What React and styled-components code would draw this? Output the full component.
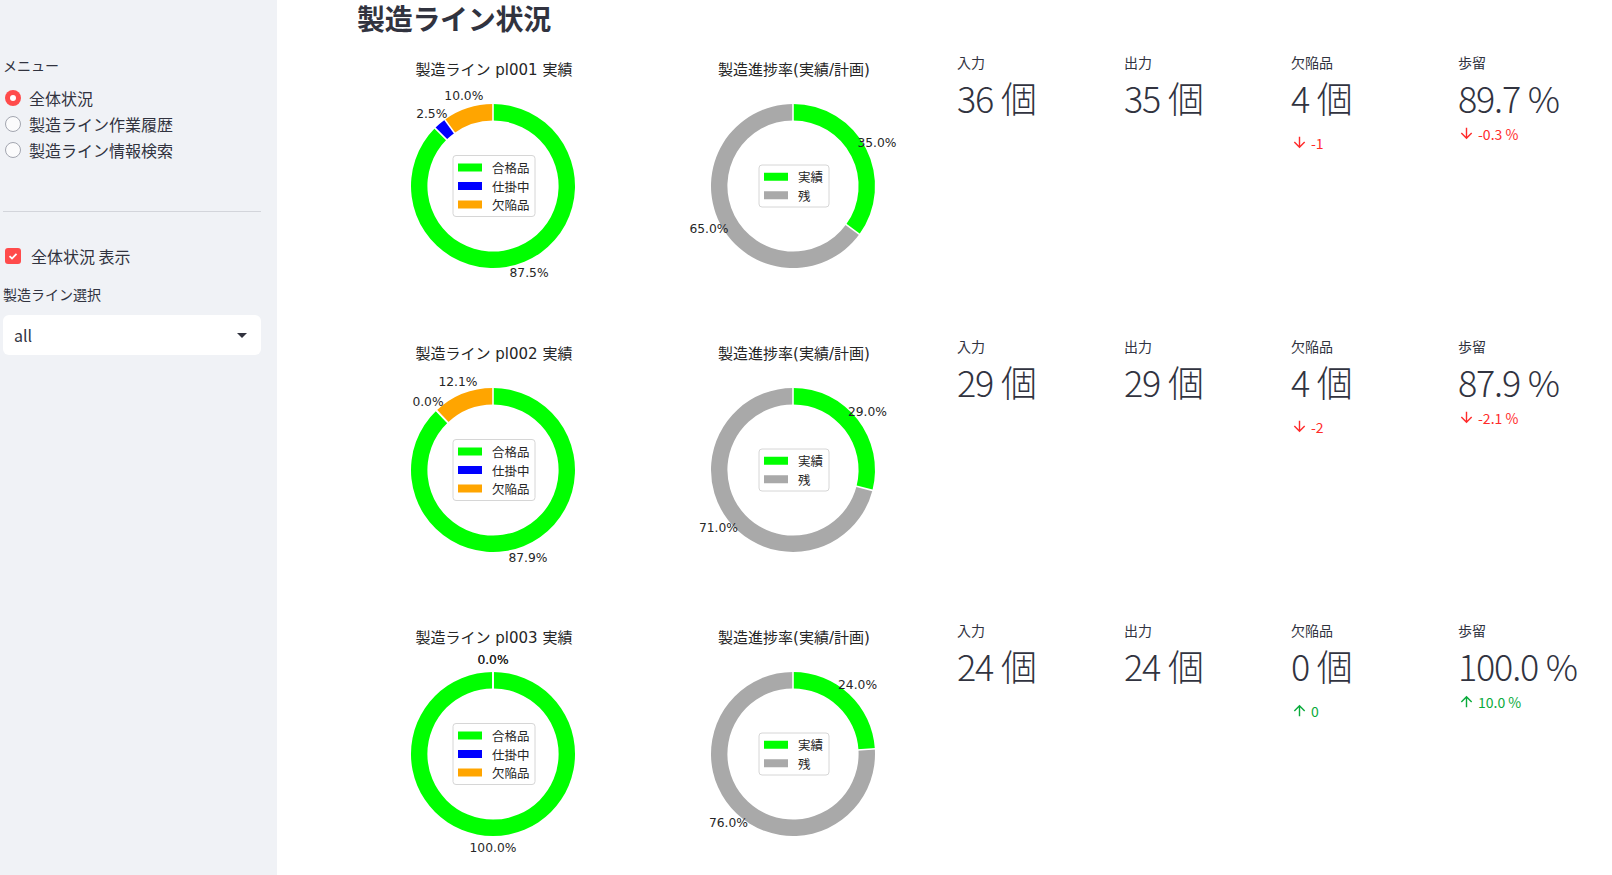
import React from "react";
import styled, { createGlobalStyle } from "styled-components";

const GlobalStyle = createGlobalStyle`
  html, body {
    margin: 0;
    padding: 0;
    background: #ffffff;
    overflow: hidden;
  }
  body {
    font-family: "Noto Sans CJK JP", "Noto Sans", sans-serif;
    color: #31333f;
  }
`;

const Page = styled.div`
  display: flex;
  width: 1612px;
  height: 875px;
`;

const Sidebar = styled.aside`
  flex: 0 0 277px;
  box-sizing: border-box;
  background: #f0f2f6;
  padding: 55px 16px 0 3px;
  display: flex;
  flex-direction: column;
`;

const SmallLabel = styled.div`
  font-size: 14px;
  line-height: 20px;
  color: #31333f;
  margin-top: ${(p) => p.$top || 0}px;
`;

const RadioGroup = styled.div`
  margin-top: 10px;
  display: flex;
  flex-direction: column;
`;

const RadioRow = styled.label`
  display: flex;
  align-items: center;
  height: 26px;
  gap: 8px;
  padding-left: 2px;
  font-size: 16px;
  color: #31333f;
`;

const RadioDot = styled.span`
  box-sizing: border-box;
  width: 16px;
  height: 16px;
  border-radius: 50%;
  flex: 0 0 16px;
  position: relative;
  background: ${(p) => (p.$on ? "#ff4b4b" : "#fbfbfc")};
  border: ${(p) => (p.$on ? "none" : "1.5px solid #a3a6b0")};
  &::after {
    content: "";
    display: ${(p) => (p.$on ? "block" : "none")};
    position: absolute;
    left: 5px;
    top: 5px;
    width: 6px;
    height: 6px;
    border-radius: 50%;
    background: #ffffff;
  }
`;

const Divider = styled.hr`
  border: none;
  border-top: 1px solid #d3d5db;
  margin: 48px 0 0 0;
  width: 100%;
`;

const CheckRow = styled.label`
  display: flex;
  align-items: center;
  gap: 10px;
  height: 24px;
  margin-top: 32px;
  padding-left: 2px;
  font-size: 16px;
  color: #31333f;
`;

const CheckBox = styled.span`
  width: 16px;
  height: 16px;
  flex: 0 0 16px;
  border-radius: 3px;
  background: #ff4b4b;
  display: flex;
  align-items: center;
  justify-content: center;
`;

const SelectBox = styled.div`
  margin-top: 11px;
  height: 40px;
  background: #ffffff;
  border-radius: 6px;
  display: flex;
  align-items: center;
  justify-content: space-between;
  padding: 0 14px 0 11px;
  font-size: 16px;
  color: #31333f;
`;

const Caret = styled.span`
  width: 0;
  height: 0;
  border-left: 5px solid transparent;
  border-right: 5px solid transparent;
  border-top: 5px solid #31333f;
`;

const Main = styled.main`
  flex: 1;
  padding-left: 80px;
  overflow: hidden;
`;

const Title = styled.h1`
  margin: 0;
  font-size: 28px;
  line-height: 36px;
  font-weight: 700;
  color: #31333f;
  letter-spacing: -0.3px;
`;

const LineRow = styled.section`
  display: grid;
  grid-template-columns: 300px 300px repeat(3, 167px) 1fr;
  height: 284px;
  margin-top: ${(p) => (p.$first ? 14 : 0)}px;
`;

const Metric = styled.div`
  display: flex;
  flex-direction: column;
  white-space: nowrap;
`;

const MetricLabel = styled.div`
  font-size: 14px;
  line-height: 20px;
  margin-top: 2px;
  color: #31333f;
`;

const MetricValue = styled.div`
  font-size: 36px;
  font-weight: 300;
  line-height: 48px;
  letter-spacing: -1.2px;
  word-spacing: 1px;
  margin-top: 1px;
  color: #31333f;
`;

const Delta = styled.div`
  display: flex;
  align-items: center;
  gap: 3px;
  font-size: 14px;
  line-height: 16px;
  color: ${(p) => (p.$up ? "rgb(9, 171, 59)" : "rgb(255, 43, 43)")};
  margin-top: ${(p) => (p.$tall ? 13 : 4)}px;
`;

const polar = (cx, cy, r, f) => {
  const a = f * 2 * Math.PI;
  return [cx + r * Math.sin(a), cy - r * Math.cos(a)];
};

const ringPath = (cx, cy, r0, r1, f0, f1) => {
  if (f1 - f0 >= 0.9999) {
    return `M${cx} ${cy - r1} A${r1} ${r1} 0 1 1 ${cx} ${cy + r1} A${r1} ${r1} 0 1 1 ${cx} ${cy - r1} Z M${cx} ${cy - r0} A${r0} ${r0} 0 1 0 ${cx} ${cy + r0} A${r0} ${r0} 0 1 0 ${cx} ${cy - r0} Z`;
  }
  const large = f1 - f0 > 0.5 ? 1 : 0;
  const [x0, y0] = polar(cx, cy, r1, f0);
  const [x1, y1] = polar(cx, cy, r1, f1);
  const [x2, y2] = polar(cx, cy, r0, f1);
  const [x3, y3] = polar(cx, cy, r0, f0);
  return `M${x0} ${y0} A${r1} ${r1} 0 ${large} 1 ${x1} ${y1} L${x2} ${y2} A${r0} ${r0} 0 ${large} 0 ${x3} ${y3} Z`;
};

const CX = 136;
const CY = 136;
const R = 82;
const RI = 65.6;

function Donut({ title, parts, legendWidth, legendRows }) {
  let acc = 0;
  const segs = parts.map((p) => {
    const s = { ...p, f0: acc, f1: acc + p.value / 100 };
    acc += p.value / 100;
    return s;
  });
  const boxH = legendRows.length * 19 + 4;
  const rowStart = CY - ((legendRows.length - 1) * 18.5) / 2;
  return (
    <svg width="300" height="284" style={{ overflow: "visible", display: "block" }}>
      <text
        x={CX + 1}
        y={20}
        textAnchor="middle"
        dominantBaseline="central"
        fontSize="15"
        fill="#262626"
        fontFamily="'DejaVu Sans', 'Noto Sans CJK JP', sans-serif"
      >
        {title}
      </text>
      {segs.map((s, i) =>
        s.f1 - s.f0 > 0 ? (
          <path
            key={i}
            d={ringPath(CX, CY, RI, R, s.f0, s.f1)}
            fill={s.color}
            fillRule="evenodd"
          />
        ) : null
      )}
      {segs.map((s, i) => {
        const [ax, ay] = polar(CX, CY, RI - 1, s.f0);
        const [bx, by] = polar(CX, CY, R + 1, s.f0);
        return <line key={i} x1={ax} y1={ay} x2={bx} y2={by} stroke="#fff" strokeWidth="1.6" />;
      })}
      {segs.map((s, i) => {
        const [tx, ty] = polar(CX, CY, R * 1.15, (s.f0 + s.f1) / 2);
        return (
          <text
            key={i}
            x={tx}
            y={ty}
            textAnchor="middle"
            dominantBaseline="central"
            fontSize="12.3"
            fill="#262626"
            fontFamily="'DejaVu Sans', sans-serif"
          >
            {s.value.toFixed(1)}%
          </text>
        );
      })}
      <rect
        x={CX + 1 - legendWidth / 2}
        y={CY - boxH / 2}
        width={legendWidth}
        height={boxH}
        rx="3"
        fill="#ffffff"
        fillOpacity="0.8"
        stroke="#d6d6d6"
      />
      {legendRows.map((row, i) => (
        <g key={row.label}>
          <rect
            x={CX + 1 - legendWidth / 2 + 5}
            y={rowStart + i * 18.5 - 4}
            width="24"
            height="8"
            fill={row.color}
          />
          <text
            x={CX + 1 - legendWidth / 2 + 39}
            y={rowStart + i * 18.5}
            dominantBaseline="central"
            fontSize="12.5"
            fill="#262626"
            fontFamily="'Noto Sans CJK JP', sans-serif"
          >
            {row.label}
          </text>
        </g>
      ))}
    </svg>
  );
}

const qualityLegend = [
  { label: "合格品", color: "#00ff00" },
  { label: "仕掛中", color: "#0000ff" },
  { label: "欠陥品", color: "#ffa500" },
];

const progressLegend = [
  { label: "実績", color: "#00ff00" },
  { label: "残", color: "#a9a9a9" },
];

const lines = [
  {
    id: "pl001",
    quality: [87.5, 2.5, 10.0],
    progress: 35,
    input: 36,
    output: 35,
    defect: { value: 4, delta: "-1", up: false },
    yieldRate: { value: "89.7", delta: "-0.3 %", up: false },
  },
  {
    id: "pl002",
    quality: [87.9, 0.0, 12.1],
    progress: 29,
    input: 29,
    output: 29,
    defect: { value: 4, delta: "-2", up: false },
    yieldRate: { value: "87.9", delta: "-2.1 %", up: false },
  },
  {
    id: "pl003",
    quality: [100.0, 0.0, 0.0],
    progress: 24,
    input: 24,
    output: 24,
    defect: { value: 0, delta: "0", up: true },
    yieldRate: { value: "100.0", delta: "10.0 %", up: true },
  },
];

function Arrow({ up }) {
  return (
    <svg width="17" height="17" viewBox="0 0 24 24" fill="currentColor">
      {up ? (
        <path d="M4 12l1.41 1.41L11 7.83V20h2V7.83l5.58 5.59L20 12l-8-8-8 8z" />
      ) : (
        <path d="M20 12l-1.41-1.41L13 16.17V4h-2v12.17l-5.58-5.59L4 12l8 8 8-8z" />
      )}
    </svg>
  );
}

function MetricCard({ label, value, tall, delta }) {
  return (
    <Metric>
      <MetricLabel>{label}</MetricLabel>
      <MetricValue>{value}</MetricValue>
      {delta && (
        <Delta $up={delta.up} $tall={tall}>
          <Arrow up={delta.up} />
          <span>{delta.text}</span>
        </Delta>
      )}
    </Metric>
  );
}

export default function App() {
  return (
    <Page>
      <GlobalStyle />
      <Sidebar>
        <SmallLabel>メニュー</SmallLabel>
        <RadioGroup>
          <RadioRow>
            <RadioDot $on />
            全体状況
          </RadioRow>
          <RadioRow>
            <RadioDot />
            製造ライン作業履歴
          </RadioRow>
          <RadioRow>
            <RadioDot />
            製造ライン情報検索
          </RadioRow>
        </RadioGroup>
        <Divider />
        <CheckRow>
          <CheckBox>
            <svg width="10" height="10" viewBox="0 0 10 10">
              <path d="M1.5 5.2 L4 7.5 L8.5 2.8" stroke="#fff" strokeWidth="1.8" fill="none" />
            </svg>
          </CheckBox>
          全体状況 表示
        </CheckRow>
        <SmallLabel $top={16}>製造ライン選択</SmallLabel>
        <SelectBox>
          all
          <Caret />
        </SelectBox>
      </Sidebar>
      <Main>
        <Title>製造ライン状況</Title>
        {lines.map((l, i) => (
          <LineRow key={l.id} $first={i === 0}>
            <Donut
              title={`製造ライン ${l.id} 実績`}
              parts={[
                { value: l.quality[0], color: "#00ff00" },
                { value: l.quality[1], color: "#0000ff" },
                { value: l.quality[2], color: "#ffa500" },
              ]}
              legendWidth={82}
              legendRows={qualityLegend}
            />
            <Donut
              title="製造進捗率(実績/計画)"
              parts={[
                { value: l.progress, color: "#00ff00" },
                { value: 100 - l.progress, color: "#a9a9a9" },
              ]}
              legendWidth={70}
              legendRows={progressLegend}
            />
            <MetricCard label="入力" value={`${l.input} 個`} tall />
            <MetricCard label="出力" value={`${l.output} 個`} tall />
            <MetricCard
              label="欠陥品"
              value={`${l.defect.value} 個`}
              tall
              delta={{ up: l.defect.up, text: l.defect.delta }}
            />
            <MetricCard
              label="歩留"
              value={`${l.yieldRate.value} %`}
              delta={{ up: l.yieldRate.up, text: l.yieldRate.delta }}
            />
          </LineRow>
        ))}
      </Main>
    </Page>
  );
}
